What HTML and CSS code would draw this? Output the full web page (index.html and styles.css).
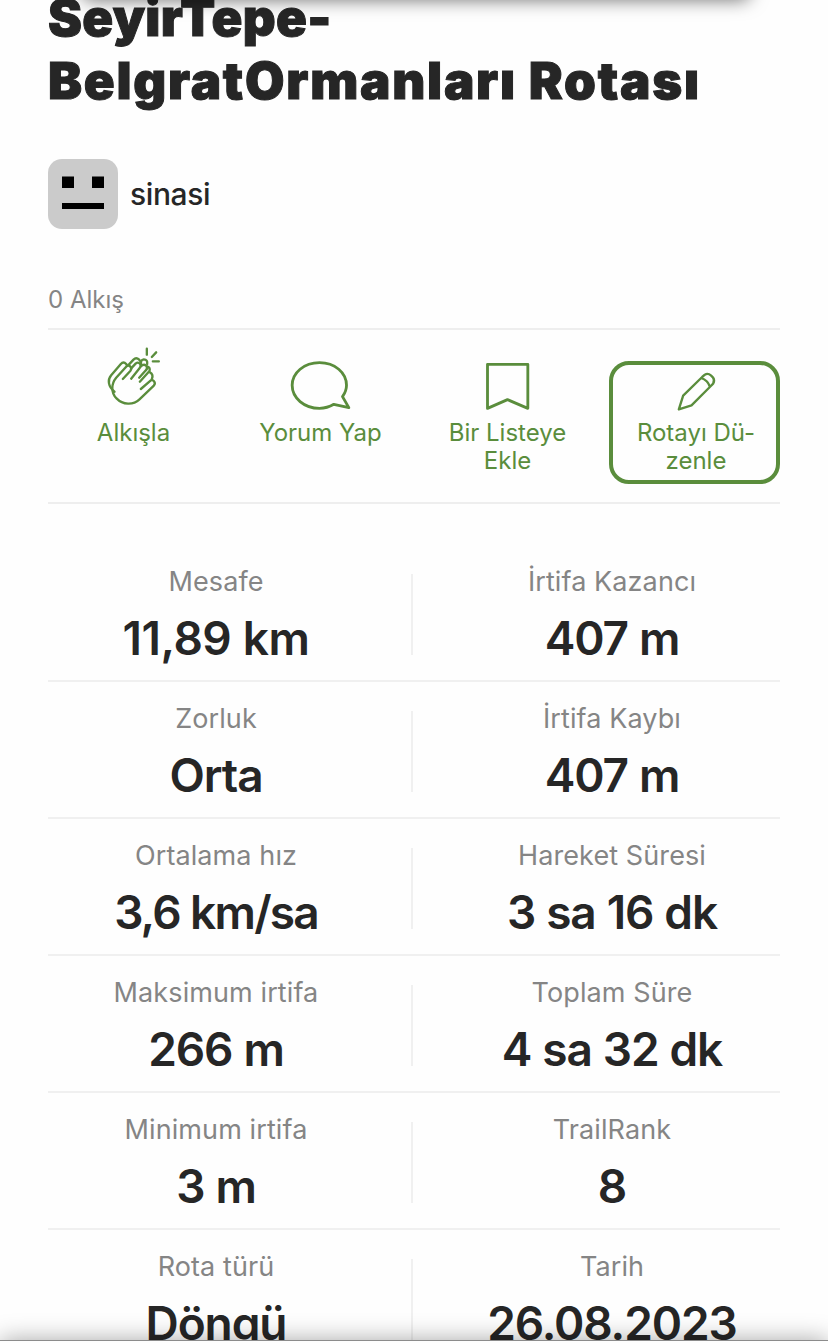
FILE: index.html
```html
<!DOCTYPE html>
<html lang="tr">
<head>
    <meta charset="UTF-8">
    <meta name="viewport" content="width=device-width, initial-scale=1.0">
    <title>SeyirTepe-BelgratOrmanları Rotası</title>
    <link rel="stylesheet" href="styles.css">
</head>
<body>
    <div class="top-bar"></div>
    <main class="trail">
        <h1 class="trail-title"><span class="title-first">SeyirTepe-</span><br><span class="title-second">BelgratOrmanları Rotası</span></h1>

        <a class="author" href="#">
            <svg class="avatar" viewBox="0 0 70 70">
                <rect width="70" height="70" fill="#cbcbcb"/>
                <path d="M14 17.500h12v11.500H14zM44 17.500h12v11.500H44zM14 44h42v6H14z"/>
            </svg>
            <span class="author-name">sinasi</span>
        </a>

        <p class="claps">0 Alkış</p>

        <div class="actions">
            <a class="action" href="#">
                <svg class="icon clap" viewBox="-5.500 63 192 144">
                    <path d="M32 143C12 127 11 107 22 94L51 60Q59 51 67 60L70 64"/>
                    <path d="M57 105L80 80Q85 73 79 67Q73 62 67 68L37 101C22 119 21 146 38 163C57 183 88 184 107 166L150 125Q156 117 150 111Q146 107 141 109L111 135"/>
                    <path d="M75 62L89 47Q97 39 106 47L108 50"/>
                    <path d="M82 73L96 58Q103 53 109 60Q113 66 107 73L82 104"/>
                    <path d="M112 60Q109 48 120 46Q132 47 130 60"/>
                    <path d="M112 66Q120 59 127 65Q133 72 126 79L106 101"/>
                    <path d="M130 67Q140 70 137 81L108 113M138 85Q150 92 144 105"/>
                    <path d="M129 14V32M157 25L144 39M147 52H165"/>
                </svg>
                <span>Alkışla</span>
            </a>
            <a class="action" href="#">
                <svg class="icon" viewBox="117.500 45 192 144">
                    <path d="M252 163C237 172 224 175 209 175C163 175 127 144 127 106S163 38 209 38S290 68 290 106C290 118 286 129 278 140L297 173Z"/>
                </svg>
                <span>Yorum Yap</span>
            </a>
            <a class="action" href="#">
                <svg class="icon" viewBox="107.500 45 192 144">
                    <path d="M142 43H263V175L202 149L142 175Z"/>
                </svg>
                <span>Bir Listeye<br>Ekle</span>
            </a>
            <a class="action action-edit" href="#">
                <svg class="icon pencil" viewBox="189.500 45 192 144">
                    <path d="M250 137L307 81L315 74Q324 68 334 77L339 82Q346 91 340 101L330 111L275 166L237 178ZM304 84Q324 91 330 110"/>
                </svg>
                <span>Rotayı Dü-<br>zenle</span>
            </a>
        </div>

        <dl class="stats">
            <div class="stat">
                <dt>Mesafe</dt>
                <dd class="distance">11,89 km</dd>
            </div>
            <div class="stat">
                <dt>İrtifa Kazancı</dt>
                <dd>407 m</dd>
            </div>
            <div class="stat">
                <dt>Zorluk</dt>
                <dd>Orta</dd>
            </div>
            <div class="stat">
                <dt>İrtifa Kaybı</dt>
                <dd>407 m</dd>
            </div>
            <div class="stat">
                <dt>Ortalama hız</dt>
                <dd class="speed">3,6 km/sa</dd>
            </div>
            <div class="stat">
                <dt>Hareket Süresi</dt>
                <dd>3 sa 16 dk</dd>
            </div>
            <div class="stat">
                <dt>Maksimum irtifa</dt>
                <dd>266 m</dd>
            </div>
            <div class="stat">
                <dt>Toplam Süre</dt>
                <dd>4 sa 32 dk</dd>
            </div>
            <div class="stat">
                <dt>Minimum irtifa</dt>
                <dd>3 m</dd>
            </div>
            <div class="stat">
                <dt>TrailRank</dt>
                <dd>8</dd>
            </div>
            <div class="stat">
                <dt>Rota türü</dt>
                <dd>Döngü</dd>
            </div>
            <div class="stat">
                <dt>Tarih</dt>
                <dd>26.08.2023</dd>
            </div>
        </dl>
    </main>
    <div class="bottom-bar"></div>
</body>
</html>
```
FILE: styles.css
```css
* {
    margin: 0;
    padding: 0;
    box-sizing: border-box;
}

body {
    position: relative;
    height: 1343px;
    overflow: hidden;
    background: #fefefe;
    color: #262626;
    font-family: Inter, "Liberation Sans", sans-serif;
}

a {
    color: inherit;
    text-decoration: none;
}

/* edges of the floating bars above and below the page */
.top-bar {
    position: absolute;
    top: -40px;
    left: 82px;
    right: 78px;
    height: 40px;
    border-radius: 8px;
    box-shadow: 0 0 18px rgba(0, 0, 0, 0.55);
}

.bottom-bar {
    position: absolute;
    top: 1340px;
    left: 0;
    right: 0;
    height: 40px;
    background: #fefefe;
    border-top: 1px solid #8c8c8c;
    box-shadow: 0 0 24px rgba(0, 0, 0, 0.35);
}

.trail {
    padding: 0 48px;
}

.trail-title {
    margin-top: -14px;
    font-size: 51px;
    font-weight: 900;
    line-height: 63px;
    white-space: nowrap;
    -webkit-text-stroke: 1px #262626;
}

.title-first {
    letter-spacing: 0.3px;
}

.title-second {
    letter-spacing: 1.75px;
}

.author {
    display: flex;
    align-items: center;
    gap: 12px;
    margin-top: 47px;
}

.avatar {
    width: 70px;
    height: 70px;
    border-radius: 14px;
}

.author-name {
    font-size: 30px;
    font-weight: 450;
    letter-spacing: -0.4px;
}

.claps {
    margin-top: 54px;
    padding-bottom: 11px;
    border-bottom: 2px solid #eee;
    color: #858585;
    font-size: 24px;
    line-height: 34px;
}

.actions {
    display: grid;
    grid-template-columns: repeat(4, 1fr);
    gap: 16px;
    padding: 31px 0 18px;
    border-bottom: 2px solid #eee;
}

.action {
    display: flex;
    flex-direction: column;
    align-items: center;
    height: 123px;
    border: 4px solid transparent;
    border-radius: 20px;
    color: #5a8d3c;
    font-size: 24px;
    line-height: 28px;
    text-align: center;
    white-space: nowrap;
}

.action-edit {
    padding-left: 3px;
    border-color: #5a8d3c;
}

.icon {
    width: 64px;
    height: 48px;
    margin-bottom: 6px;
    overflow: visible;
    fill: none;
    stroke: currentColor;
    stroke-width: 8.5;
    stroke-linecap: round;
    stroke-linejoin: round;
}

.clap {
    stroke-width: 7;
}

.pencil {
    margin-left: -3px;
    stroke-width: 7;
}

.stats {
    display: grid;
    grid-template-columns: 1fr 1fr;
    margin-top: 41px;
}

.stat {
    position: relative;
    height: 137px;
    padding-top: 19px;
    border-bottom: 2px solid #f0f0f0;
    text-align: center;
    white-space: nowrap;
}

.stat:nth-child(odd) {
    padding-right: 30px;
}

.stat:nth-child(even) {
    padding-left: 30px;
}

/* short divider between the two columns */
.stat:nth-child(odd)::after {
    content: "";
    position: absolute;
    top: 29px;
    right: 1px;
    width: 2px;
    height: 81px;
    background: #f0f0f0;
}

.stat dt {
    color: #858585;
    font-size: 27px;
    line-height: 36px;
    letter-spacing: 0.1px;
}

.stat dd {
    margin-top: 9px;
    font-size: 46px;
    font-weight: 600;
    line-height: 58px;
    letter-spacing: -1.1px;
    word-spacing: 0.5px;
}

.stat .distance {
    letter-spacing: -0.5px;
}

.stat .speed {
    letter-spacing: -1.8px;
}
```
